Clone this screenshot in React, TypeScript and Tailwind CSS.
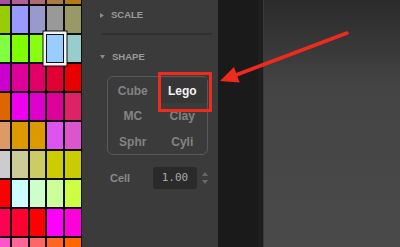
import React from "react";

const swatches: string[][] = [
  ["#a8509e", "#b05f98", "#b06a72", "#aa7c44", "#b27a14"],
  ["#99cc00", "#9999ff", "#9999cc", "#999999", "#999966"],
  ["#7fff3f", "#80ff00", "#88ff10", "#99ccff", "#99cccc"],
  ["#cc00cc", "#dd0099", "#e00066", "#e00033", "#e80000"],
  ["#dd6600", "#ee00ee", "#dd00cc", "#dd0099", "#dd2266"],
  ["#dd9966", "#dd9900", "#dd9900", "#dd55ee", "#dd55cc"],
  ["#cccccc", "#cccc99", "#cccc66", "#cccc00", "#c8cc00"],
  ["#ff0000", "#ccffff", "#ccffcc", "#ccff99", "#ccff44"],
  ["#ff0055", "#ff0033", "#ff0000", "#ff00ff", "#ff00dd"],
  ["#ff55cc", "#ff6699", "#ff6666", "#ff6622", "#ff6600"],
];

const widths = ["w-[10px]", "w-[16px]", "w-[15px]", "w-[16px]", "w-[16px]"];

const shapes = [
  { label: "Cube", active: false },
  { label: "Lego", active: true },
  { label: "MC", active: false },
  { label: "Clay", active: false },
  { label: "Sphr", active: false },
  { label: "Cyli", active: false },
];

function Swatches() {
  return (
    <div className="w-[82px] h-full bg-[#0e0e0e] overflow-hidden shrink-0">
      <div className="flex flex-col gap-[2px] -mt-[23px]">
        {swatches.map((row, r) => (
          <div key={r} className="flex gap-[2px] h-[27px] shrink-0">
            {row.map((c, i) => (
              <div
                key={i}
                className={`${widths[i]} h-full shrink-0 ${
                  r === 2 && i === 3
                    ? "relative z-10 shadow-[0_0_0_1px_#111,0_0_0_3.5px_#f4f4f4,0_0_0_4.5px_#111]"
                    : ""
                }`}
                style={{ backgroundColor: c }}
              />
            ))}
          </div>
        ))}
      </div>
    </div>
  );
}

function SectionHeader({ label, open }: { label: string; open: boolean }) {
  return (
    <div className="flex items-center h-[14px] gap-[7px]">
      {open ? (
        <svg width="5" height="4" viewBox="0 0 5 4" className="ml-[0px]">
          <path d="M0 0 L5 0 L2.5 4 Z" fill="#8a8a8a" />
        </svg>
      ) : (
        <svg width="4" height="5" viewBox="0 0 4 5">
          <path d="M0 0 L4 2.5 L0 5 Z" fill="#8a8a8a" />
        </svg>
      )}
      <span className="text-[9.5px] font-bold text-[#9a9a9a] leading-none">{label}</span>
    </div>
  );
}

export default function App() {
  return (
    <div className="relative w-[400px] h-[247px] flex overflow-hidden font-['Liberation_Sans',Arial,sans-serif]">
      <Swatches />

      {/* side panel */}
      <div className="w-[136px] h-full bg-[#3b3b3b] pl-[18px] flex flex-col shrink-0">
        <div className="mt-[8px]">
          <SectionHeader label="SCALE" open={false} />
        </div>
        <div className="mt-[11px] ml-[2px] w-[110px] h-[2px] bg-[#313131]" />
        <div className="mt-[15px]">
          <SectionHeader label="SHAPE" open={true} />
        </div>

        <div className="mt-[12px] ml-[7px] w-[101px] h-[79px] border border-[#585858] rounded-[6px] pt-[1px] grid grid-cols-2 grid-rows-[25px_26px_25px]">
          {shapes.map((s) => (
            <div
              key={s.label}
              className={`flex items-center justify-center text-[12px] font-bold ${
                s.active ? "text-[#f2f2f2] bg-[#363636]" : "text-[#838383]"
              }`}
            >
              {s.label}
            </div>
          ))}
        </div>

        <div className="mt-[12px] flex items-center h-[22px]">
          <span className="ml-[10px] w-[43px] text-[11px] font-bold text-[#8a8a8a]">Cell</span>
          <div className="w-[44px] h-[22px] rounded-[3px] bg-[#2a2a2a] flex items-center justify-center text-[11px] text-[#a8a8a8] font-['DejaVu_Sans_Mono',monospace]">
            1.00
          </div>
          <svg width="6" height="12" viewBox="0 0 6 12" className="ml-[5px]">
            <path d="M0 4 L3 0 L6 4 Z" fill="#676767" />
            <path d="M0 8 L3 12 L6 8 Z" fill="#676767" />
          </svg>
        </div>
      </div>

      <div className="w-[40px] h-full bg-[#1a1a1a] shrink-0" />
      <div className="w-[5px] h-full bg-[#1f1f1f] shrink-0" />
      <div className="flex-1 h-full border-l border-[#3a3a3a] bg-gradient-to-b from-[#2b2b2b] via-[#444444] via-[35%] to-[#4a4a4a]" />

      {/* annotation */}
      <div className="absolute left-[158px] top-[72px] w-[54px] h-[40px] border-[3px] border-[#ee2b1c] pointer-events-none" />
      <svg className="absolute inset-0 pointer-events-none" width="400" height="247" viewBox="0 0 400 247">
        <line x1="347" y1="33" x2="232" y2="76.5" stroke="#ee2b1c" strokeWidth="3.5" strokeLinecap="round" />
        <polygon points="220,81 234,67 239.6,82.5" fill="#ee2b1c" />
      </svg>
    </div>
  );
}
